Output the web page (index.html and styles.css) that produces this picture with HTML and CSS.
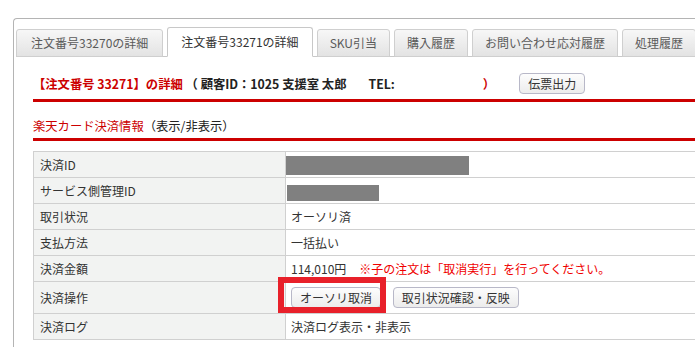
FILE: index.html
```html
<!DOCTYPE html>
<html lang="ja">
<head>
    <meta charset="UTF-8">
    <title>注文番号33271の詳細</title>
    <link rel="stylesheet" href="styles.css">
</head>
<body>
    <div class="panel">
        <ul class="tabs">
            <li class="tab">注文番号33270の詳細</li>
            <li class="tab active">注文番号33271の詳細</li>
            <li class="tab">SKU引当</li>
            <li class="tab">購入履歴</li>
            <li class="tab">お問い合わせ応対履歴</li>
            <li class="tab">処理履歴</li>
        </ul>

        <div class="content">
            <div class="order-head">
                <h2 class="order-title">
                    <span class="red">【注文番号 33271】の詳細</span>
                    （ 顧客ID：1025 支援室 太郎<span class="tel">TEL:</span><span class="tel-blank"></span><span class="red">）</span>
                </h2>
                <button class="btn">伝票出力</button>
            </div>

            <h3 class="section-title"><span class="red">楽天カード決済情報</span>（表示/非表示）</h3>

            <table class="info-table">
                <tr>
                    <th>決済ID</th>
                    <td><span class="mask mask-id"></span></td>
                </tr>
                <tr>
                    <th>サービス側管理ID</th>
                    <td><span class="mask mask-service"></span></td>
                </tr>
                <tr>
                    <th>取引状況</th>
                    <td>オーソリ済</td>
                </tr>
                <tr>
                    <th>支払方法</th>
                    <td>一括払い</td>
                </tr>
                <tr>
                    <th>決済金額</th>
                    <td>114,010円<span class="notice">※子の注文は「取消実行」を行ってください。</span></td>
                </tr>
                <tr>
                    <th>決済操作</th>
                    <td class="actions">
                        <span class="highlight"><button class="btn">オーソリ取消</button></span>
                        <button class="btn">取引状況確認・反映</button>
                    </td>
                </tr>
                <tr>
                    <th>決済ログ</th>
                    <td>決済ログ表示・非表示</td>
                </tr>
            </table>
        </div>
    </div>
</body>
</html>
```

FILE: styles.css
```css
body {
    margin: 0;
    padding: 18px 0 0 13px;
    font-family: "Noto Sans CJK JP", sans-serif;
    font-size: 12px;
    color: #333;
    background-color: white;
    overflow: hidden;
}
.panel {
    width: 760px;
    height: 400px;
    padding: 8px 0 0 2px;
    border: 1px solid #b4b4b4;
    border-right: none;
    border-bottom: none;
    border-top-left-radius: 4px;
}
.tabs {
    display: flex;
    align-items: flex-end;
    gap: 4px;
    list-style: none;
    margin: 0;
    padding: 0;
    border-bottom: 1px solid #c8c8c8;
}
.tab {
    height: 26px;
    line-height: 26px;
    padding: 0 12px;
    margin-bottom: -1px;
    color: #5a5a5a;
    font-size: 12px;
    border: 1px solid #cfcfcf;
    border-radius: 3px 3px 0 0;
    background: linear-gradient(#f7f7f7, #e3e3e3);
}
.tab:first-child {
    padding: 0 14px;
}
.tab.active {
    height: 28px;
    line-height: 28px;
    padding: 0 13px;
    color: #333;
    background: white;
    border-color: #c8c8c8;
    border-bottom-color: white;
}
.content {
    padding-left: 17px;
}
.red {
    color: #cc0000;
}
.order-head {
    display: flex;
    align-items: center;
    padding: 16px 0 5px;
    border-bottom: 3px solid #cc0000;
}
.order-title {
    margin: 0;
    font-size: 12.3px;
    font-weight: bold;
    color: #222;
}
.tel {
    margin-left: 22px;
}
.tel-blank {
    display: inline-block;
    width: 88px;
}
.btn {
    height: 21px;
    padding: 0 8px;
    font-family: inherit;
    font-size: 12px;
    color: #333;
    border: 1px solid #b8b8c8;
    border-radius: 4px;
    background: linear-gradient(#fdfdfd, #ececec);
    cursor: pointer;
}
.order-head .btn {
    margin-left: 24px;
}
.section-title {
    margin: 0;
    padding: 15px 0 3px;
    font-size: 12.3px;
    font-weight: normal;
    line-height: 18px;
    color: #222;
    border-bottom: 3px solid #cc0000;
}
.info-table {
    width: 100%;
    margin-top: 10px;
    border-collapse: collapse;
}
.info-table th,
.info-table td {
    height: 25px;
    padding: 0 5px;
    border: 1px solid #d0d0d0;
    text-align: left;
    font-weight: normal;
    line-height: 17px;
}
.info-table th {
    width: 240px;
    padding-left: 6px;
    background-color: #f2f3f2;
}
.mask {
    display: inline-block;
    vertical-align: middle;
    background-color: #808080;
}
.mask-id {
    width: 183px;
    height: 19px;
    margin-left: -5px;
}
.mask-service {
    width: 92px;
    height: 16px;
    margin-left: -4px;
    margin-top: 5px;
}
.notice {
    margin-left: 13px;
    color: #f00000;
}
.info-table td.actions {
    height: 31px;
}
.actions .btn {
    margin-right: 9px;
}
.highlight {
    position: relative;
}
.highlight::after {
    content: "";
    position: absolute;
    left: -13px;
    top: -12px;
    width: 96px;
    height: 24px;
    border: 6px solid #e8202a;
}
```
